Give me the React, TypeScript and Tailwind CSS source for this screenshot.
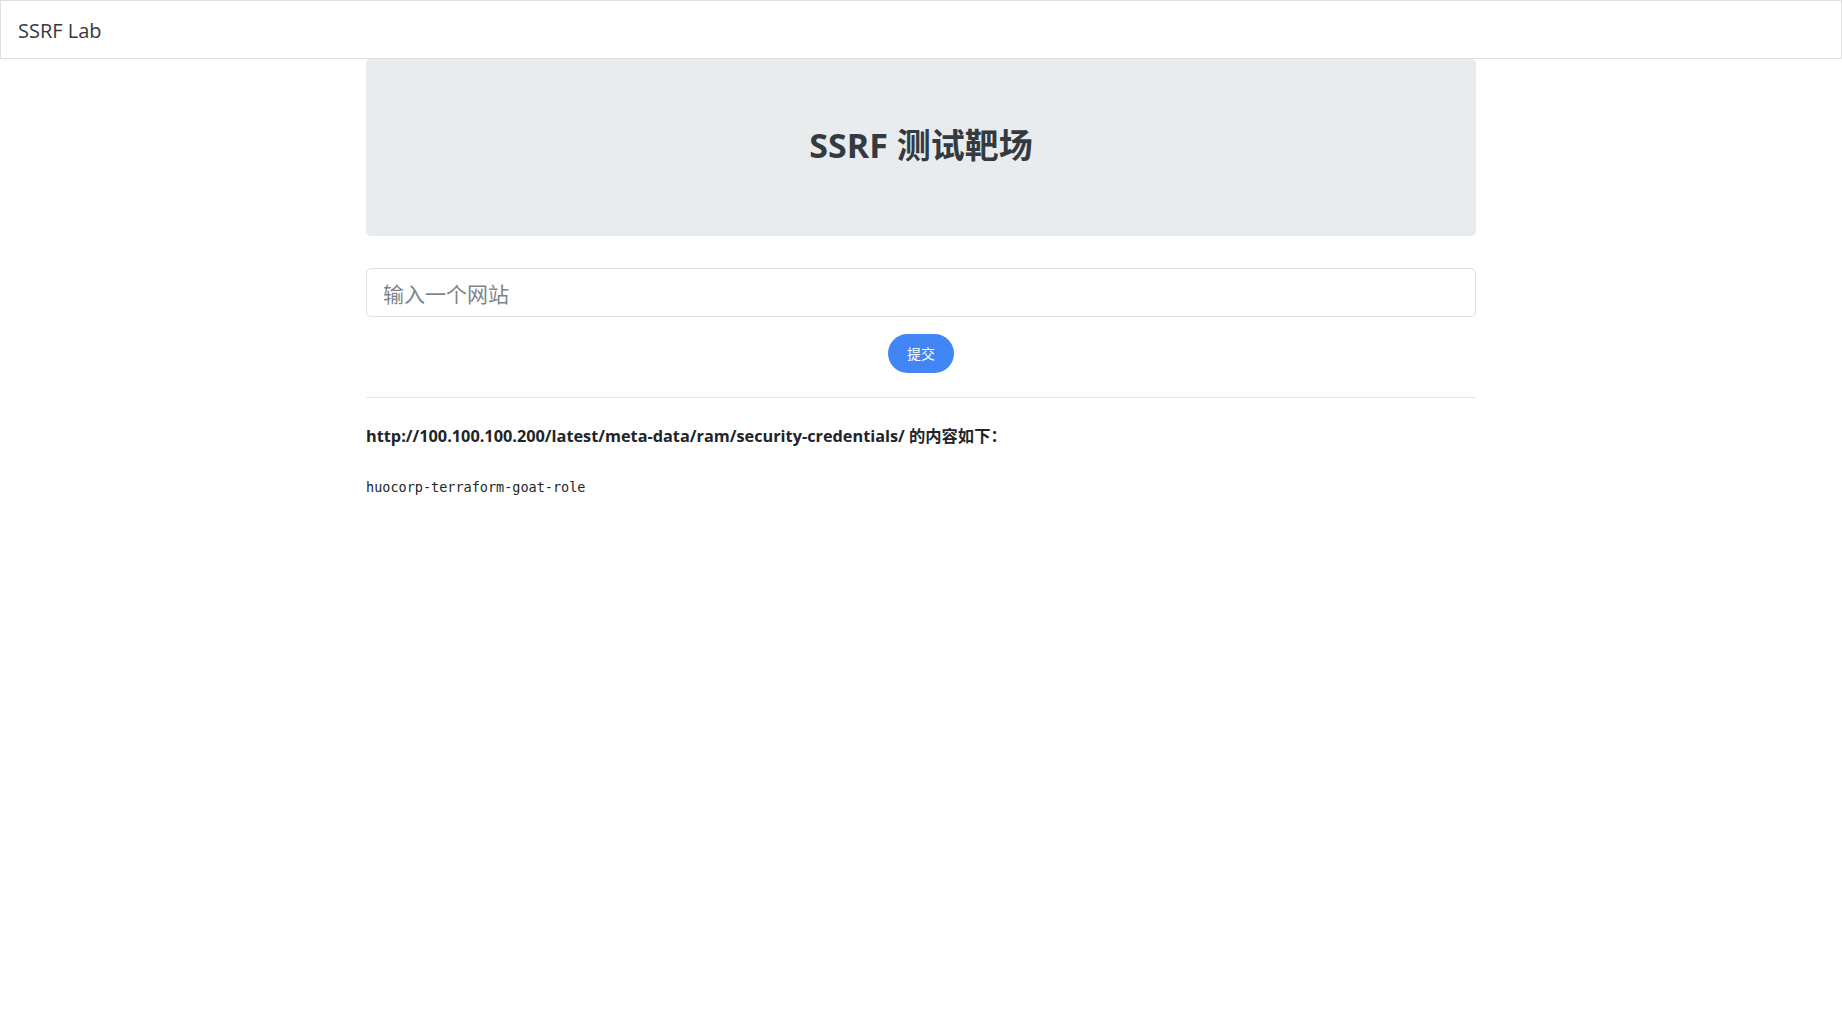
import React from "react";

const sans = "font-['Open_Sans','Noto_Sans_CJK_SC',sans-serif]";

export default function App() {
  return (
    <div className={`min-h-screen bg-white text-[#343a40] ${sans}`}>
      <nav className="h-[59px] border border-[#dfdfdf] flex items-center px-[17px]">
        <span className="text-[20px] text-[#343a40] pt-[2px]">SSRF Lab</span>
      </nav>

      <main className="w-[1110px] mx-auto">
        <div className="bg-[#e9ecef] rounded-[5px] h-[177px] flex items-center justify-center mb-[32px]">
          <h1 className="text-[34px] font-bold leading-[40px] text-[#343a40] pb-[6px]">SSRF 测试靶场</h1>
        </div>

        <input
          type="text"
          placeholder="输入一个网站"
          className="w-full h-[49px] border border-[#dfdfdf] rounded-[5px] px-[16px] pt-[3px] text-[21px] text-[#495057] placeholder:text-[#7d858c] outline-none"
        />

        <div className="flex justify-center mt-[17px]">
          <button className="w-[66px] h-[39px] rounded-full bg-[#4285f4] text-white text-[14px]">提交</button>
        </div>

        <hr className="mt-[24px] border-0 border-t border-[#e6e6e6]" />

        <p className="mt-[26px] text-[16.3px] font-bold leading-[24px] text-[#212529]">
          http://100.100.100.200/latest/meta-data/ram/security-credentials/ 的内容如下：
        </p>

        <pre className="mt-[29px] font-['DejaVu_Sans_Mono',monospace] text-[13.5px] leading-[20px] text-[#212529]">
          huocorp-terraform-goat-role
        </pre>
      </main>
    </div>
  );
}
